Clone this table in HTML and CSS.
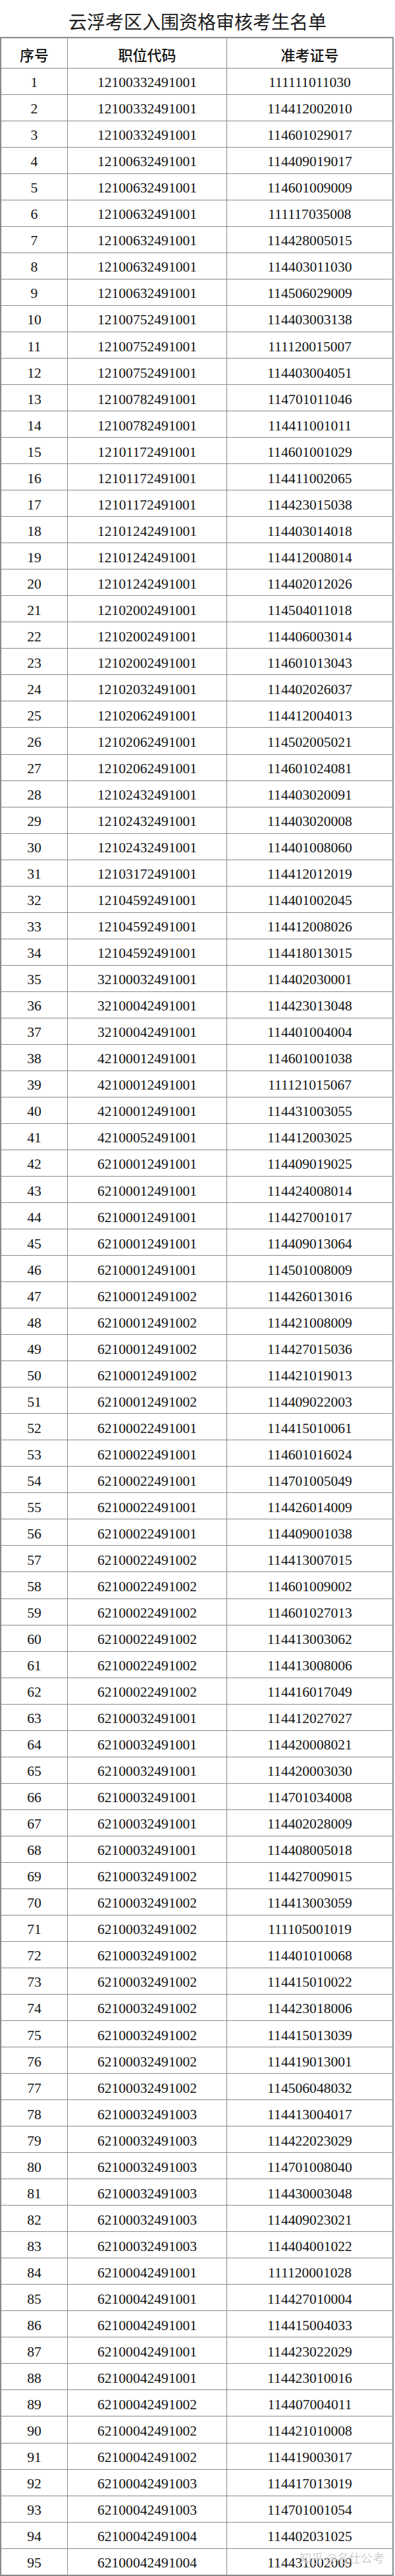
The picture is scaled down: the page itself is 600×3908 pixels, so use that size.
FILE: index.html
```html
<!DOCTYPE html>
<html lang="zh-CN">
<head>
<meta charset="utf-8">
<title>云浮考区入围资格审核考生名单</title>
<link rel="stylesheet" href="styles.css">
</head>
<body>
<div class="page">
  <h1 class="title">云浮考区入围资格审核考生名单</h1>
  <div class="sheet">
    <div class="row head"><div>序号</div><div>职位代码</div><div>准考证号</div></div>
    <div class="row"><div>1</div><div>12100332491001</div><div>111111011030</div></div>
    <div class="row"><div>2</div><div>12100332491001</div><div>114412002010</div></div>
    <div class="row"><div>3</div><div>12100332491001</div><div>114601029017</div></div>
    <div class="row"><div>4</div><div>12100632491001</div><div>114409019017</div></div>
    <div class="row"><div>5</div><div>12100632491001</div><div>114601009009</div></div>
    <div class="row"><div>6</div><div>12100632491001</div><div>111117035008</div></div>
    <div class="row"><div>7</div><div>12100632491001</div><div>114428005015</div></div>
    <div class="row"><div>8</div><div>12100632491001</div><div>114403011030</div></div>
    <div class="row"><div>9</div><div>12100632491001</div><div>114506029009</div></div>
    <div class="row"><div>10</div><div>12100752491001</div><div>114403003138</div></div>
    <div class="row"><div>11</div><div>12100752491001</div><div>111120015007</div></div>
    <div class="row"><div>12</div><div>12100752491001</div><div>114403004051</div></div>
    <div class="row"><div>13</div><div>12100782491001</div><div>114701011046</div></div>
    <div class="row"><div>14</div><div>12100782491001</div><div>114411001011</div></div>
    <div class="row"><div>15</div><div>12101172491001</div><div>114601001029</div></div>
    <div class="row"><div>16</div><div>12101172491001</div><div>114411002065</div></div>
    <div class="row"><div>17</div><div>12101172491001</div><div>114423015038</div></div>
    <div class="row"><div>18</div><div>12101242491001</div><div>114403014018</div></div>
    <div class="row"><div>19</div><div>12101242491001</div><div>114412008014</div></div>
    <div class="row"><div>20</div><div>12101242491001</div><div>114402012026</div></div>
    <div class="row"><div>21</div><div>12102002491001</div><div>114504011018</div></div>
    <div class="row"><div>22</div><div>12102002491001</div><div>114406003014</div></div>
    <div class="row"><div>23</div><div>12102002491001</div><div>114601013043</div></div>
    <div class="row"><div>24</div><div>12102032491001</div><div>114402026037</div></div>
    <div class="row"><div>25</div><div>12102062491001</div><div>114412004013</div></div>
    <div class="row"><div>26</div><div>12102062491001</div><div>114502005021</div></div>
    <div class="row"><div>27</div><div>12102062491001</div><div>114601024081</div></div>
    <div class="row"><div>28</div><div>12102432491001</div><div>114403020091</div></div>
    <div class="row"><div>29</div><div>12102432491001</div><div>114403020008</div></div>
    <div class="row"><div>30</div><div>12102432491001</div><div>114401008060</div></div>
    <div class="row"><div>31</div><div>12103172491001</div><div>114412012019</div></div>
    <div class="row"><div>32</div><div>12104592491001</div><div>114401002045</div></div>
    <div class="row"><div>33</div><div>12104592491001</div><div>114412008026</div></div>
    <div class="row"><div>34</div><div>12104592491001</div><div>114418013015</div></div>
    <div class="row"><div>35</div><div>32100032491001</div><div>114402030001</div></div>
    <div class="row"><div>36</div><div>32100042491001</div><div>114423013048</div></div>
    <div class="row"><div>37</div><div>32100042491001</div><div>114401004004</div></div>
    <div class="row"><div>38</div><div>42100012491001</div><div>114601001038</div></div>
    <div class="row"><div>39</div><div>42100012491001</div><div>111121015067</div></div>
    <div class="row"><div>40</div><div>42100012491001</div><div>114431003055</div></div>
    <div class="row"><div>41</div><div>42100052491001</div><div>114412003025</div></div>
    <div class="row"><div>42</div><div>62100012491001</div><div>114409019025</div></div>
    <div class="row"><div>43</div><div>62100012491001</div><div>114424008014</div></div>
    <div class="row"><div>44</div><div>62100012491001</div><div>114427001017</div></div>
    <div class="row"><div>45</div><div>62100012491001</div><div>114409013064</div></div>
    <div class="row"><div>46</div><div>62100012491001</div><div>114501008009</div></div>
    <div class="row"><div>47</div><div>62100012491002</div><div>114426013016</div></div>
    <div class="row"><div>48</div><div>62100012491002</div><div>114421008009</div></div>
    <div class="row"><div>49</div><div>62100012491002</div><div>114427015036</div></div>
    <div class="row"><div>50</div><div>62100012491002</div><div>114421019013</div></div>
    <div class="row"><div>51</div><div>62100012491002</div><div>114409022003</div></div>
    <div class="row"><div>52</div><div>62100022491001</div><div>114415010061</div></div>
    <div class="row"><div>53</div><div>62100022491001</div><div>114601016024</div></div>
    <div class="row"><div>54</div><div>62100022491001</div><div>114701005049</div></div>
    <div class="row"><div>55</div><div>62100022491001</div><div>114426014009</div></div>
    <div class="row"><div>56</div><div>62100022491001</div><div>114409001038</div></div>
    <div class="row"><div>57</div><div>62100022491002</div><div>114413007015</div></div>
    <div class="row"><div>58</div><div>62100022491002</div><div>114601009002</div></div>
    <div class="row"><div>59</div><div>62100022491002</div><div>114601027013</div></div>
    <div class="row"><div>60</div><div>62100022491002</div><div>114413003062</div></div>
    <div class="row"><div>61</div><div>62100022491002</div><div>114413008006</div></div>
    <div class="row"><div>62</div><div>62100022491002</div><div>114416017049</div></div>
    <div class="row"><div>63</div><div>62100032491001</div><div>114412027027</div></div>
    <div class="row"><div>64</div><div>62100032491001</div><div>114420008021</div></div>
    <div class="row"><div>65</div><div>62100032491001</div><div>114420003030</div></div>
    <div class="row"><div>66</div><div>62100032491001</div><div>114701034008</div></div>
    <div class="row"><div>67</div><div>62100032491001</div><div>114402028009</div></div>
    <div class="row"><div>68</div><div>62100032491001</div><div>114408005018</div></div>
    <div class="row"><div>69</div><div>62100032491002</div><div>114427009015</div></div>
    <div class="row"><div>70</div><div>62100032491002</div><div>114413003059</div></div>
    <div class="row"><div>71</div><div>62100032491002</div><div>111105001019</div></div>
    <div class="row"><div>72</div><div>62100032491002</div><div>114401010068</div></div>
    <div class="row"><div>73</div><div>62100032491002</div><div>114415010022</div></div>
    <div class="row"><div>74</div><div>62100032491002</div><div>114423018006</div></div>
    <div class="row"><div>75</div><div>62100032491002</div><div>114415013039</div></div>
    <div class="row"><div>76</div><div>62100032491002</div><div>114419013001</div></div>
    <div class="row"><div>77</div><div>62100032491002</div><div>114506048032</div></div>
    <div class="row"><div>78</div><div>62100032491003</div><div>114413004017</div></div>
    <div class="row"><div>79</div><div>62100032491003</div><div>114422023029</div></div>
    <div class="row"><div>80</div><div>62100032491003</div><div>114701008040</div></div>
    <div class="row"><div>81</div><div>62100032491003</div><div>114430003048</div></div>
    <div class="row"><div>82</div><div>62100032491003</div><div>114409023021</div></div>
    <div class="row"><div>83</div><div>62100032491003</div><div>114404001022</div></div>
    <div class="row"><div>84</div><div>62100042491001</div><div>111120001028</div></div>
    <div class="row"><div>85</div><div>62100042491001</div><div>114427010004</div></div>
    <div class="row"><div>86</div><div>62100042491001</div><div>114415004033</div></div>
    <div class="row"><div>87</div><div>62100042491001</div><div>114423022029</div></div>
    <div class="row"><div>88</div><div>62100042491001</div><div>114423010016</div></div>
    <div class="row"><div>89</div><div>62100042491002</div><div>114407004011</div></div>
    <div class="row"><div>90</div><div>62100042491002</div><div>114421010008</div></div>
    <div class="row"><div>91</div><div>62100042491002</div><div>114419003017</div></div>
    <div class="row"><div>92</div><div>62100042491003</div><div>114417013019</div></div>
    <div class="row"><div>93</div><div>62100042491003</div><div>114701001054</div></div>
    <div class="row"><div>94</div><div>62100042491004</div><div>114402031025</div></div>
    <div class="row"><div>95</div><div>62100042491004</div><div>114431002009</div></div>
  </div>
  <div class="watermark">知乎 @名仕公考</div>
</div>
</body>
</html>
```
FILE: styles.css
```css
html, body {
  margin: 0;
  padding: 0;
  background: #fff;
}

.page {
  position: relative;
  width: 600px;
}

.title {
  margin: 0;
  height: 56px;
  box-sizing: border-box;
  padding-top: 18px;
  font-family: "Noto Sans CJK SC", sans-serif;
  font-weight: 400;
  font-size: 28px;
  line-height: 28px;
  color: #1a1a1a;
  text-align: center;
  letter-spacing: 0;
}

.sheet {
  width: 598px;
  box-sizing: border-box;
  border: 2px solid #8a8a8a;
  background: #8a8a8a;
  display: flex;
  flex-direction: column;
  gap: 1px;
}

.row {
  display: grid;
  grid-template-columns: 100px 241px 251px;
  column-gap: 1px;
  height: 39.04px;
}

.row > div {
  background: #fff;
  display: flex;
  align-items: center;
  justify-content: center;
  padding-top: 4px;
  box-sizing: border-box;
  overflow: hidden;
  font-family: "Liberation Serif", "Times New Roman", serif;
  font-size: 21.6px;
  line-height: 22px;
  color: #111;
}

.row.head {
  height: 44.7px;
}

.row.head > div {
  padding-top: 3px;
  font-family: "Noto Sans CJK SC", sans-serif;
  font-weight: 500;
  font-size: 22px;
  line-height: 24px;
  color: #111;
}

.watermark {
  position: absolute;
  left: 455px;
  top: 3868px;
  font-family: "Noto Sans CJK SC", sans-serif;
  font-size: 18px;
  line-height: 24px;
  color: rgba(190, 190, 190, 0.75);
  text-shadow: 0 0 1px rgba(255, 255, 255, 0.9);
  white-space: nowrap;
}
```
